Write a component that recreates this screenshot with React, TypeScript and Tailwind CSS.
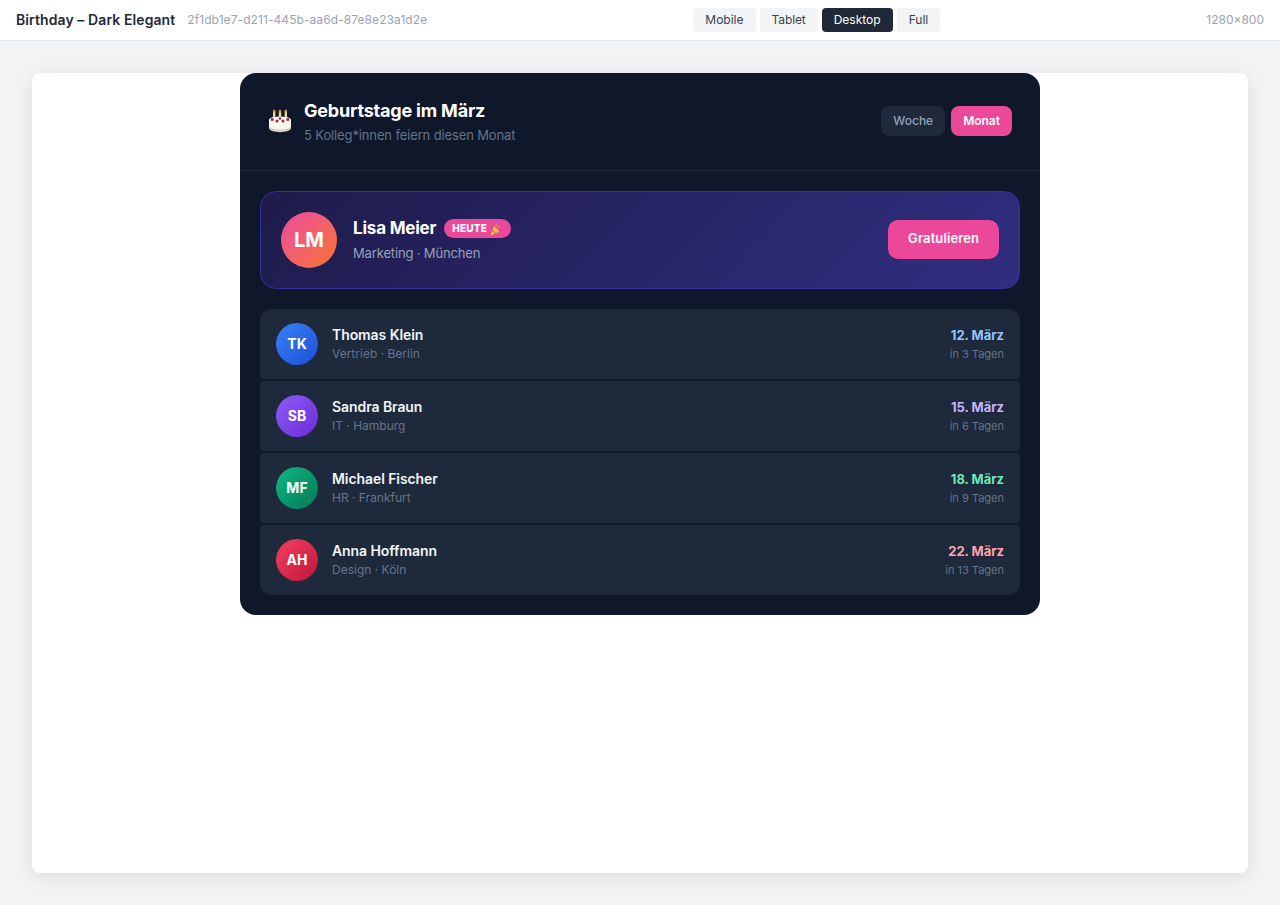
import React from "react";

const rows = [
  { i: "TK", n: "Thomas Klein", s: "Vertrieb · Berlin", d: "12. März", r: "in 3 Tagen", g: "from-[#3b82f6] to-[#1d4ed8]", c: "text-[#93c5fd]", rd: "rounded-t-xl rounded-b-[4px]" },
  { i: "SB", n: "Sandra Braun", s: "IT · Hamburg", d: "15. März", r: "in 6 Tagen", g: "from-[#8b5cf6] to-[#6d28d9]", c: "text-[#c4b5fd]", rd: "rounded-[4px]" },
  { i: "MF", n: "Michael Fischer", s: "HR · Frankfurt", d: "18. März", r: "in 9 Tagen", g: "from-[#10b981] to-[#047857]", c: "text-[#6ee7b7]", rd: "rounded-[4px]" },
  { i: "AH", n: "Anna Hoffmann", s: "Design · Köln", d: "22. März", r: "in 13 Tagen", g: "from-[#f43f5e] to-[#be123c]", c: "text-[#fda4af]", rd: "rounded-b-xl rounded-t-[4px]" },
];

function Cake() {
  return (
    <svg width="24" height="24" viewBox="0 0 24 24" className="shrink-0">
      <rect x="5" y="2.5" width="2.4" height="8" rx="0.6" fill="#e6d9a8" />
      <rect x="10.8" y="2.5" width="2.4" height="8" rx="0.6" fill="#e6d9a8" />
      <rect x="16.6" y="2.5" width="2.4" height="8" rx="0.6" fill="#e6d9a8" />
      <ellipse cx="6.2" cy="2.2" rx="1.2" ry="1.6" fill="#e0a030" />
      <ellipse cx="12" cy="2.2" rx="1.2" ry="1.6" fill="#e0a030" />
      <ellipse cx="17.8" cy="2.2" rx="1.2" ry="1.6" fill="#e0a030" />
      <path d="M1 11 C1 6.5 23 6.5 23 11 V19 C23 24.5 1 24.5 1 19 Z" fill="#d9d3c9" />
      <path d="M1 11 C1 6.5 23 6.5 23 11 V17 C23 21.5 1 21.5 1 17 Z" fill="#fbf8f3" />
      <circle cx="4.2" cy="10.5" r="1.5" fill="#a91e2c" />
      <circle cx="9" cy="12" r="1.5" fill="#a91e2c" />
      <circle cx="15" cy="12" r="1.5" fill="#a91e2c" />
      <circle cx="19.8" cy="10.5" r="1.5" fill="#a91e2c" />
      <circle cx="12" cy="9.5" r="1.3" fill="#a91e2c" />
    </svg>
  );
}

function Popper() {
  return (
    <svg width="13" height="15" viewBox="0 0 13 15" className="shrink-0">
      <path d="M0.5 14.5 L4 5 L9.5 10.5 Z" fill="#f4c542" />
      <path d="M2.8 8.4 L6.8 12.2 L5 12.9 L2 9.9 Z" fill="#e8843a" />
      <circle cx="6.5" cy="1.5" r="0.9" fill="#a855f7" />
      <circle cx="11.5" cy="4.5" r="0.9" fill="#3b82f6" />
      <circle cx="9" cy="6" r="0.8" fill="#fbbf24" />
      <path d="M6 6 C7 4.5 5.5 3.5 6.5 2.5" stroke="#f59e0b" strokeWidth="0.9" fill="none" />
      <path d="M9 9 C10.5 7.8 11 9.5 12.8 8.2" stroke="#8b5cf6" strokeWidth="0.9" fill="none" />
    </svg>
  );
}

export default function App() {
  return (
    <div className="h-[905px] overflow-hidden bg-[#f3f4f6] font-['Inter',sans-serif]">
      <header className="flex h-[41px] items-center justify-between border-b border-[#e5e7eb] bg-white px-4">
        <div className="flex items-center gap-3">
          <span className="text-sm font-semibold tracking-[0.09px] text-[#1f2937]">Birthday – Dark Elegant</span>
          <span className="text-xs tracking-[0.08px] text-[#9ca3af]">2f1db1e7-d211-445b-aa6d-87e8e23a1d2e</span>
        </div>
        <div className="flex items-center gap-1">
          <span className="flex h-6 items-center rounded bg-[#f3f4f6] px-3 text-xs text-[#374151]">Mobile</span>
          <span className="flex h-6 items-center rounded bg-[#f3f4f6] px-3 text-xs tracking-[-0.1px] text-[#374151]">Tablet</span>
          <span className="flex h-6 items-center rounded bg-[#1f2937] px-3 text-xs text-white">Desktop</span>
          <span className="flex h-6 items-center rounded bg-[#f3f4f6] px-3 text-xs text-[#374151]">Full</span>
        </div>
        <div className="text-xs text-[#9ca3af]">1280×800</div>
      </header>
      <main className="px-8 pt-8">
        <div className="h-[800px] rounded-lg bg-white shadow-[0_4px_24px_rgba(0,0,0,0.1)]">
          <div className="mx-auto w-[800px] overflow-hidden rounded-2xl bg-[#0f172a]">
            <div className="flex h-[98px] items-center justify-between border-b border-[#1e293b] px-7 pb-[1px]">
              <div className="flex items-center gap-3">
                <Cake />
                <div>
                  <div className="text-lg leading-[28px] font-bold tracking-[-0.2px] text-white">Geburtstage im März</div>
                  <div className="text-[13px] leading-[20px] tracking-[-0.13px] text-[#64748b]">5 Kolleg*innen feiern diesen Monat</div>
                </div>
              </div>
              <div className="flex gap-1.5">
                <span className="flex h-[30px] items-center rounded-lg bg-[#1e293b] px-3 text-xs font-medium text-[#94a3b8]">Woche</span>
                <span className="flex h-[30px] items-center rounded-lg bg-[#ec4899] px-3 text-xs font-semibold text-white">Monat</span>
              </div>
            </div>
            <div className="p-5">
              <div className="flex h-[98px] items-center justify-between rounded-2xl border border-[#3730a3] bg-[linear-gradient(135deg,#1e1b4b,#312e81)] px-5">
                <div className="flex items-center gap-4">
                  <div className="flex h-14 w-14 items-center justify-center rounded-full bg-gradient-to-br from-[#ec4899] to-[#f97316] text-xl font-bold text-white">LM</div>
                  <div className="mb-[2px]">
                    <div className="flex items-center gap-2">
                      <span className="text-[17px] leading-[24px] font-bold tracking-[-0.2px] text-white">Lisa Meier</span>
                      <span className="mt-[2px] flex h-[19px] items-center gap-[3px] rounded-full bg-[#ec4899] px-2 text-[10px] font-extrabold tracking-[0.2px] text-white">
                        HEUTE <Popper />
                      </span>
                    </div>
                    <div className="mt-[3px] text-[13px] leading-[20px] tracking-[-0.15px] text-[#94a3b8]">Marketing · München</div>
                  </div>
                </div>
                <span className="mb-[2px] flex h-[39px] items-center rounded-[10px] bg-[#ec4899] px-5 text-[13px] font-semibold tracking-[0.1px] text-white">Gratulieren</span>
              </div>
              <div className="mt-5 flex flex-col gap-0.5">
                {rows.map((r) => (
                  <div key={r.i} className={`flex h-[70px] items-center justify-between bg-[#1e293b] px-4 ${r.rd}`}>
                    <div className="flex items-center gap-3.5">
                      <div className={`flex h-[42px] w-[42px] items-center justify-center rounded-full bg-gradient-to-br text-sm font-bold text-white ${r.g}`}>{r.i}</div>
                      <div>
                        <div className="text-sm leading-[18px] font-semibold tracking-[-0.08px] text-[#f1f5f9]">{r.n}</div>
                        <div className="mt-[2px] text-xs leading-[16px] text-[#64748b]">{r.s}</div>
                      </div>
                    </div>
                    <div className="text-right">
                      <div className={`text-[13px] leading-[18px] font-bold ${r.c}`}>{r.d}</div>
                      <div className="mt-[2px] text-[11px] leading-[16px] text-[#64748b]">{r.r}</div>
                    </div>
                  </div>
                ))}
              </div>
            </div>
          </div>
        </div>
      </main>
    </div>
  );
}
